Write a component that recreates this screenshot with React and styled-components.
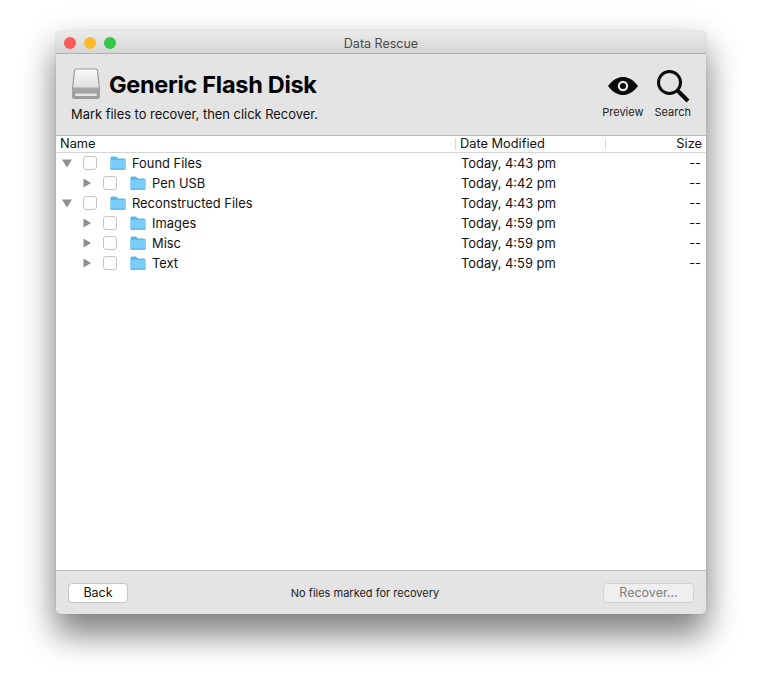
import React from 'react';
import styled, { createGlobalStyle } from 'styled-components';

const GlobalStyle = createGlobalStyle`
  html, body {
    margin: 0;
    background: #fff;
  }
  body {
    font-family: Inter, "Liberation Sans", sans-serif;
    color: #111;
  }
`;

const Page = styled.div`
  width: 762px;
  height: 694px;
  padding: 31px 0 0 56px;
  box-sizing: border-box;
  overflow: hidden;
`;

const Window = styled.div`
  width: 650px;
  height: 583px;
  display: flex;
  flex-direction: column;
  border-radius: 5px;
  overflow: hidden;
  background: #e4e4e4;
  box-shadow: 0 0 1px rgba(0, 0, 0, 0.4), 0 22px 32px rgba(0, 0, 0, 0.42), 0 8px 36px rgba(0, 0, 0, 0.16);
`;

const TitleBar = styled.div`
  height: 23px;
  flex-shrink: 0;
  display: flex;
  align-items: center;
  justify-content: center;
  position: relative;
  box-sizing: border-box;
  padding-top: 2px;
  background: linear-gradient(#ebebeb, #d5d5d5);
  border-bottom: 1px solid #b4b4b4;
  font-size: 12.5px;
  color: #4a4a4a;
`;

const Lights = styled.div`
  position: absolute;
  left: 8px;
  top: 6px;
  display: flex;
  gap: 8px;
`;

const Light = styled.span`
  width: 12px;
  height: 12px;
  border-radius: 50%;
  background: ${({ color }) => color};
`;

const Header = styled.div`
  height: 82px;
  flex-shrink: 0;
  display: flex;
  justify-content: space-between;
  box-sizing: border-box;
  padding: 15px 15px 0 15px;
  background: #e4e4e4;
  border-bottom: 1px solid #b9b9b9;
`;

const HeaderInfo = styled.div`
  display: flex;
  flex-direction: column;
`;

const DiskRow = styled.div`
  display: flex;
  align-items: center;
  gap: 8px;
  height: 30px;
`;

const DiskTitle = styled.div`
  font-size: 23.5px;
  font-weight: 700;
  letter-spacing: -0.3px;
  color: #000;
`;

const Hint = styled.div`
  margin-top: 8px;
  font-size: 12.9px;
`;

const Tools = styled.div`
  display: flex;
  gap: 11px;
`;

const Tool = styled.div`
  display: flex;
  flex-direction: column;
  align-items: center;
  gap: 2px;
  font-size: 11px;
  color: #222;
`;

const ToolIcon = styled.div`
  height: 34px;
  display: flex;
  align-items: center;
  justify-content: center;
`;

const Columns = '400px 150px 100px';

const ColumnHeader = styled.div`
  height: 17px;
  flex-shrink: 0;
  display: grid;
  grid-template-columns: ${Columns};
  box-sizing: border-box;
  background: #fff;
  border-bottom: 1px solid #d6d6d6;
  font-size: 12.8px;
  line-height: 16px;
`;

const ColumnTitle = styled.div`
  padding: 0 4px;
  text-align: ${({ $right }) => ($right ? 'right' : 'left')};
  position: relative;
  ${({ $divider }) => ($divider ? `
    &::after {
      content: '';
      position: absolute;
      right: 0;
      top: 2px;
      bottom: 2px;
      width: 1px;
      background: #dcdcdc;
    }
  ` : '')}
`;

const List = styled.div`
  flex: 1;
  background: #fff;
`;

const Row = styled.div`
  height: 20px;
  display: grid;
  grid-template-columns: ${Columns};
  align-items: center;
  font-size: 12.9px;
`;

const NameCell = styled.div`
  display: flex;
  align-items: center;
  padding-left: ${({ $level }) => 6 + $level * 20}px;
`;

const Arrow = styled.svg`
  width: 10px;
  height: 10px;
  flex-shrink: 0;
  fill: #8e8e8e;
`;

const Check = styled.span`
  width: 12px;
  height: 12px;
  margin-left: 11px;
  flex-shrink: 0;
  border: 1px solid #c4c4c4;
  border-radius: 3px;
  background: #fff;
`;

const FolderIcon = styled.svg`
  width: 16px;
  height: 14px;
  margin-left: 13px;
  margin-right: 1px;
  flex-shrink: 0;
`;

const RowName = styled.span`
  margin-left: 5px;
`;

const DateCell = styled.div`
  padding-left: 5px;
`;

const SizeCell = styled.div`
  padding-right: 5px;
  text-align: right;
`;

const Footer = styled.div`
  height: 44px;
  flex-shrink: 0;
  display: grid;
  grid-template-columns: 1fr auto 1fr;
  align-items: center;
  box-sizing: border-box;
  padding: 0 12px;
  background: #e4e4e4;
  border-top: 1px solid #b9b9b9;
`;

const Button = styled.button`
  height: 20px;
  width: ${({ $width }) => $width}px;
  padding: 0;
  box-sizing: border-box;
  border: 1px solid ${({ disabled }) => (disabled ? '#d2d2d2' : '#c6c6c6')};
  border-radius: 4px;
  background: ${({ disabled }) => (disabled ? '#efefef' : '#fff')};
  color: ${({ disabled }) => (disabled ? '#808080' : '#111')};
  font-family: inherit;
  font-size: 12.5px;
  justify-self: ${({ $end }) => ($end ? 'end' : 'start')};
`;

const Status = styled.div`
  margin-right: 32px;
  font-size: 11px;
  color: #222;
`;

const DiskIcon = () => (
  <svg width="30" height="32" viewBox="0 0 30 32">
    <defs>
      <linearGradient id="diskTop" x1="0" y1="0" x2="0" y2="1">
        <stop offset="0" stopColor="#fafafa" />
        <stop offset="1" stopColor="#dedede" />
      </linearGradient>
      <linearGradient id="diskBase" x1="0" y1="0" x2="0" y2="1">
        <stop offset="0" stopColor="#a8a8a8" />
        <stop offset="1" stopColor="#9a9a9a" />
      </linearGradient>
    </defs>
    <path d="M3.5 3 Q3.5 1 5.5 1 H24.5 Q26.5 1 26.5 3 L28.5 21 H1.5 Z" fill="url(#diskTop)" stroke="#9c9c9c" strokeWidth="1.2" />
    <rect x="1" y="19.5" width="28" height="11.5" rx="2.5" fill="url(#diskBase)" />
    <rect x="4" y="25.5" width="22" height="2.5" rx="1.2" fill="#e6e6e6" />
  </svg>
);

const EyeIcon = () => (
  <svg width="32" height="20" viewBox="0 0 32 20">
    <path d="M1 10 C6 3.5 11 1 16 1 C21 1 26 3.5 31 10 C26 16.5 21 19 16 19 C11 19 6 16.5 1 10 Z" fill="#0a0a0a" />
    <circle cx="16" cy="10" r="5.2" fill="#e4e4e4" />
    <circle cx="16" cy="10" r="3" fill="#0a0a0a" />
  </svg>
);

const SearchIcon = () => (
  <svg width="34" height="34" viewBox="0 0 34 34" fill="none" stroke="#0a0a0a">
    <circle cx="13.5" cy="13.5" r="11" strokeWidth="3" />
    <path d="M21.5 21.5 L32 32" strokeWidth="4" />
  </svg>
);

const Folder = () => (
  <FolderIcon viewBox="0 0 16 14">
    <path d="M0.5 2 Q0.5 0.5 2 0.5 H6 L8 2.5 H14 Q15.5 2.5 15.5 4 V12 Q15.5 13.5 14 13.5 H2 Q0.5 13.5 0.5 12 Z" fill="#5bb8ef" />
    <path d="M0.5 4 H15.5 V12 Q15.5 13.5 14 13.5 H2 Q0.5 13.5 0.5 12 Z" fill="#7ccdf9" />
    <rect x="0.5" y="12.6" width="15" height="0.9" fill="#4ea9e0" />
  </FolderIcon>
);

const Disclosure = ({ open }) => (
  <Arrow viewBox="0 0 10 10">
    {open ? <path d="M0 1.5 H10 L5 9.5 Z" /> : <path d="M1.5 0.5 L9 5 L1.5 9.5 Z" />}
  </Arrow>
);

const rows = [
  { name: 'Found Files', level: 0, open: true, date: 'Today, 4:43 pm' },
  { name: 'Pen USB', level: 1, date: 'Today, 4:42 pm' },
  { name: 'Reconstructed Files', level: 0, open: true, date: 'Today, 4:43 pm' },
  { name: 'Images', level: 1, date: 'Today, 4:59 pm' },
  { name: 'Misc', level: 1, date: 'Today, 4:59 pm' },
  { name: 'Text', level: 1, date: 'Today, 4:59 pm' },
];

export default function App() {
  return (
    <Page>
      <GlobalStyle />
      <Window>
        <TitleBar>
          <Lights>
            <Light color="#fc5b57" />
            <Light color="#fdbc2e" />
            <Light color="#33c748" />
          </Lights>
          Data Rescue
        </TitleBar>
        <Header>
          <HeaderInfo>
            <DiskRow>
              <DiskIcon />
              <DiskTitle>Generic Flash Disk</DiskTitle>
            </DiskRow>
            <Hint>Mark files to recover, then click Recover.</Hint>
          </HeaderInfo>
          <Tools>
            <Tool>
              <ToolIcon><EyeIcon /></ToolIcon>
              Preview
            </Tool>
            <Tool>
              <ToolIcon><SearchIcon /></ToolIcon>
              Search
            </Tool>
          </Tools>
        </Header>
        <ColumnHeader>
          <ColumnTitle $divider>Name</ColumnTitle>
          <ColumnTitle $divider>Date Modified</ColumnTitle>
          <ColumnTitle $right>Size</ColumnTitle>
        </ColumnHeader>
        <List>
          {rows.map((row) => (
            <Row key={row.name}>
              <NameCell $level={row.level}>
                <Disclosure open={row.open} />
                <Check />
                <Folder />
                <RowName>{row.name}</RowName>
              </NameCell>
              <DateCell>{row.date}</DateCell>
              <SizeCell>--</SizeCell>
            </Row>
          ))}
        </List>
        <Footer>
          <Button $width={60}>Back</Button>
          <Status>No files marked for recovery</Status>
          <Button $width={91} $end disabled>Recover...</Button>
        </Footer>
      </Window>
    </Page>
  );
}
